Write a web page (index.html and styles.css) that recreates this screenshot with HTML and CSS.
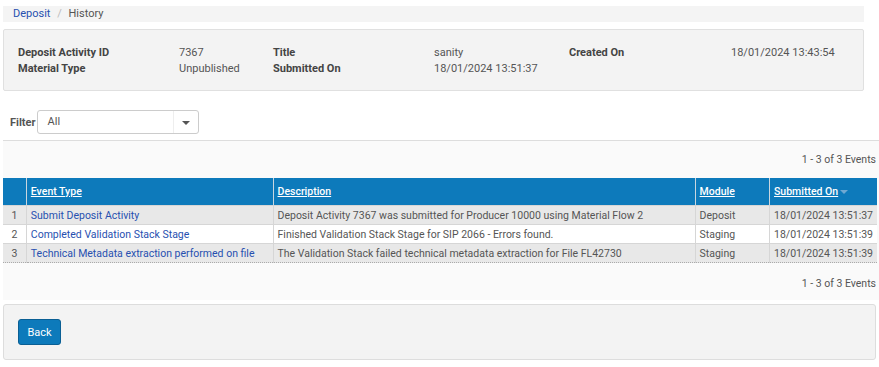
FILE: index.html
```html
<!DOCTYPE html>
<html>
<head>
	<title>Deposit History</title>
	<link rel="stylesheet" href="styles.css">
</head>
<body>
	<div class="page">
		<div class="breadcrumb">
			<a href="#">Deposit</a>
			<span class="sep">/</span>
			<span class="current">History</span>
		</div>

		<div class="details">
			<div class="field field-1">
				<span class="label">Deposit Activity ID</span><span class="value">7367</span>
				<span class="label">Material Type</span><span class="value">Unpublished</span>
			</div>
			<div class="field field-2">
				<span class="label">Title</span><span class="value">sanity</span>
				<span class="label">Submitted On</span><span class="value">18/01/2024 13:51:37</span>
			</div>
			<div class="field field-3">
				<span class="label">Created On</span><span class="value">18/01/2024 13:43:54</span>
			</div>
		</div>

		<div class="filter">
			<span class="filter-label">Filter</span>
			<div class="select">
				<span class="select-text">All</span>
				<span class="select-caret"></span>
			</div>
		</div>

		<div class="results">
			<div class="paging">1 - 3 of 3 Events</div>
			<table class="events">
				<thead>
					<tr>
						<th class="num"></th>
						<th class="col-type"><a href="#">Event Type</a></th>
						<th class="col-desc"><a href="#">Description</a></th>
						<th class="col-module"><a href="#">Module</a></th>
						<th class="col-date"><a href="#">Submitted On</a><span class="sort"></span></th>
					</tr>
				</thead>
				<tbody>
					<tr>
						<td class="num">1</td>
						<td><a href="#">Submit Deposit Activity</a></td>
						<td>Deposit Activity 7367 was submitted for Producer 10000 using Material Flow 2</td>
						<td>Deposit</td>
						<td>18/01/2024 13:51:37</td>
					</tr>
					<tr>
						<td class="num">2</td>
						<td><a href="#">Completed Validation Stack Stage</a></td>
						<td>Finished Validation Stack Stage for SIP 2066 - Errors found.</td>
						<td>Staging</td>
						<td>18/01/2024 13:51:39</td>
					</tr>
					<tr>
						<td class="num">3</td>
						<td><a href="#">Technical Metadata extraction performed on file</a></td>
						<td>The Validation Stack failed technical metadata extraction for File FL42730</td>
						<td>Staging</td>
						<td>18/01/2024 13:51:39</td>
					</tr>
				</tbody>
			</table>
			<div class="paging bottom">1 - 3 of 3 Events</div>
		</div>

		<div class="actions">
			<button class="btn">Back</button>
		</div>
	</div>
</body>
</html>
```

FILE: styles.css
```css
body {
	margin: 0;
	font-family: Roboto, "Liberation Sans", sans-serif;
	font-size: 10.5px;
	color: #555;
	background: #fff;
}
a {
	color: #2750b0;
	text-decoration: none;
}
.page {
	padding: 6px 0 0 3px;
}

.breadcrumb {
	width: 851px;
	height: 16px;
	line-height: 15px;
	padding-left: 10px;
	background: #f4f4f4;
	color: #555;
	font-size: 11px;
}
.breadcrumb .sep {
	color: #bbb;
	margin: 0 4px;
}

.details {
	display: flex;
	width: 861px;
	height: 62px;
	margin-top: 7px;
	background: #f3f3f3;
	border: 1px solid #e0e0e0;
	border-radius: 2px;
	box-sizing: border-box;
	padding: 15px 0 0 14px;
	font-size: 11px;
}
.details .field {
	display: grid;
	grid-auto-rows: 16px;
	line-height: 16px;
}
.details .field-1 {
	width: 255px;
	grid-template-columns: 161px 1fr;
}
.details .field-2 {
	width: 296px;
	grid-template-columns: 161px 1fr;
}
.details .field-3 {
	grid-template-columns: 162px 1fr;
}
.details .label {
	font-weight: bold;
	color: #444;
}
.details .value {
	color: #555;
}

.filter {
	display: flex;
	align-items: center;
	margin: 19px 0 0 7px;
	height: 24px;
}
.filter-label {
	font-weight: bold;
	color: #555;
	margin-right: 1px;
	font-size: 11px;
}
.select {
	display: flex;
	width: 162px;
	height: 24px;
	box-sizing: border-box;
	border: 1px solid #ccc;
	border-radius: 3px;
	background: #fff;
}
.select-text {
	flex: 1;
	padding-left: 10px;
	line-height: 22px;
	color: #555;
	font-size: 11px;
}
.select-caret {
	width: 24px;
	border-left: 1px solid #eee;
	position: relative;
}
.select-caret::after {
	content: "";
	position: absolute;
	left: 8px;
	top: 10px;
	border-left: 4px solid transparent;
	border-right: 4px solid transparent;
	border-top: 4px solid #555;
}

.results {
	margin-top: 6px;
	border-top: 1px solid #ddd;
	background: #fafafa;
	height: 159px;
	width: 876px;
}
.paging {
	text-align: right;
	padding-right: 3px;
	height: 37px;
	line-height: 38px;
	color: #555;
}
.paging.bottom {
	height: 40px;
	line-height: 42px;
}

.events {
	width: 874px;
	border-collapse: collapse;
}
.events th {
	background: #0d7abb;
	height: 27px;
	text-align: left;
	font-weight: 500;
	padding: 0 4px;
	border-left: 1px solid #c9d6df;
	white-space: nowrap;
}
.events th:first-child {
	border-left: none;
}
.events th a {
	color: #fff;
	text-decoration: underline;
}
.events th .sort {
	display: inline-block;
	margin-left: 2px;
	vertical-align: middle;
	border-left: 4px solid transparent;
	border-right: 4px solid transparent;
	border-top: 4px solid #6fa8d2;
}
.events td {
	height: 18px;
	padding: 0 4px;
	border-left: 1px solid #d6d6d6;
	border-top: 1px solid #d6d6d6;
	white-space: nowrap;
	color: #555;
}
.events td:first-child {
	border-left: none;
}
.events tbody tr {
	background: #e8e8e8;
}
.events tbody tr:nth-child(2) {
	background: #fff;
}
.events tbody tr:last-child td {
	border-bottom: 1px dotted #aaa;
}
.events .num {
	width: 15px;
	text-align: center;
}
.events .col-type { width: 238px; }
.events .col-desc { width: 414px; }
.events .col-module { width: 66px; }

.actions {
	margin-top: 4px;
	width: 873px;
	height: 56px;
	box-sizing: border-box;
	background: #f3f3f3;
	border: 1px solid #ddd;
	border-radius: 3px;
	padding: 14px 0 0 14px;
}
.btn {
	width: 43px;
	height: 26px;
	padding: 0;
	font-family: Roboto, "Liberation Sans", sans-serif;
	font-size: 11px;
	color: #fff;
	background: #0d7abb;
	border: 1px solid #0a5f94;
	border-radius: 3px;
}
```
